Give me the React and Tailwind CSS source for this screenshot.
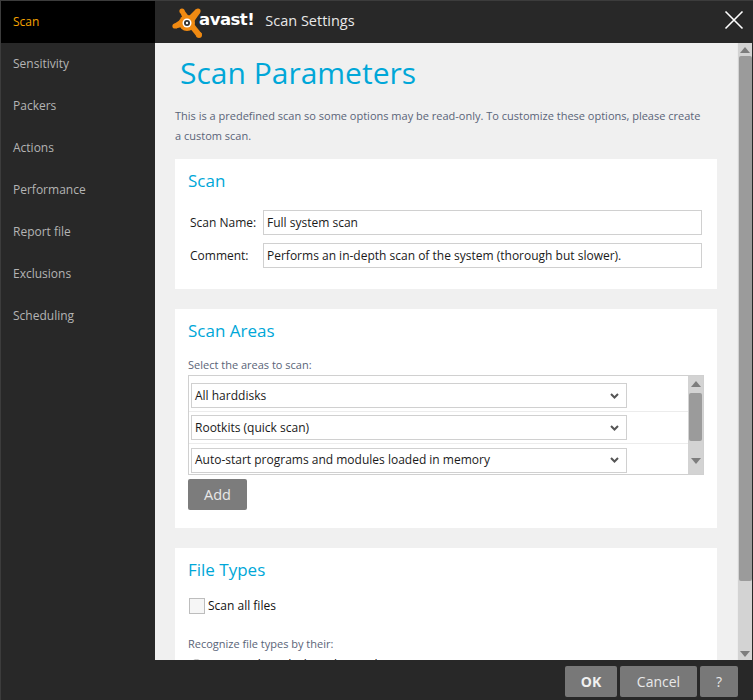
import React from "react";

const NAV_ITEMS = ["Scan", "Sensitivity", "Packers", "Actions", "Performance", "Report file", "Exclusions", "Scheduling"];
const AREAS = ["All harddisks", "Rootkits (quick scan)", "Auto-start programs and modules loaded in memory"];

function AvastLogo() {
  return (
    <div className="flex items-center">
      <svg width="31" height="32" viewBox="0 0 31 32" className="shrink-0">
        <g fill="#f08a12">
          <circle cx="15" cy="17" r="8" />
          <circle cx="3" cy="20" r="2.6" />
          <circle cx="10" cy="5" r="2.6" />
          <circle cx="26" cy="5" r="2.6" />
          <circle cx="27" cy="29" r="3" />
          <path d="M2 18 L11 12 L13 20 L4 22.5 Z" />
          <path d="M8 6 L12 4 L18 12 L11 13 Z" />
          <path d="M24 3 L28 7 L21 17 L16 11 Z" />
          <path d="M17 21 L22 18 L30 28 L25 31 Z" />
        </g>
        <circle cx="15" cy="17" r="4.5" fill="#fff" />
        <circle cx="15" cy="17" r="3" fill="#333" />
        <circle cx="15" cy="17" r="1.2" fill="#fff" />
      </svg>
      <span className="ml-[-4px] mt-[-3px] font-['DejaVu_Sans'] text-[16.5px] font-bold tracking-[-0.5px] text-white">avast!</span>
    </div>
  );
}

function Arrow({ up, className }) {
  return (
    <svg width="10" height="6" viewBox="0 0 10 6" className={className}>
      <path d={up ? "M5 0 L10 6 L0 6 Z" : "M0 0 L10 0 L5 6 Z"} fill="#7d7d7d" />
    </svg>
  );
}

function Scrollbar({ children, className }) {
  return <div className={`flex shrink-0 flex-col items-center bg-[#d3d3d3] ${className}`}>{children}</div>;
}

function Field({ label, value }) {
  return (
    <div className="flex items-center">
      <label className="w-[75px] pl-[2px] text-[12px] text-[#1a1a1a]">{label}</label>
      <div className="flex h-[25px] w-[439px] items-center border border-[#d0d0d0] bg-white px-[3px] text-[12px] text-[#1a1a1a]">{value}</div>
    </div>
  );
}

function AreaRow({ label, last }) {
  return (
    <div className={`flex h-[32px] items-center pl-[2px] ${last ? "" : "border-b border-[#ececec]"}`}>
      <div className="flex h-[25px] w-[436px] items-center justify-between border border-[#d0d0d0] bg-white pl-[3px] pr-[7px] text-[12px] text-[#1a1a1a]">
        <span>{label}</span>
        <svg width="9" height="6" viewBox="0 0 9 6">
          <path d="M1 1 L4.5 4.5 L8 1" fill="none" stroke="#555" strokeWidth="2" />
        </svg>
      </div>
    </div>
  );
}

export default function App() {
  return (
    <div className="flex h-[700px] w-[753px] overflow-hidden border-l border-t border-[#3c3c3c] bg-[#282828] font-['Open_Sans',sans-serif]">
      {/* Sidebar */}
      <aside className="w-[154px] shrink-0">
        {NAV_ITEMS.map((item, i) => (
          <div
            key={item}
            className={`flex h-[42px] items-center pl-[12px] text-[12px] ${i === 0 ? "bg-black text-[#f5a300]" : "text-[#b4b4b4]"}`}
          >
            {item}
          </div>
        ))}
      </aside>

      <div className="flex min-w-0 flex-1 flex-col">
        {/* Header */}
        <header className="flex h-[42px] shrink-0 items-center justify-between pl-[17px] pr-[9px]">
          <div className="flex items-center gap-[11px]">
            <AvastLogo />
            <span className="mt-[-3px] text-[14.5px] text-[#e8e8e8]">Scan Settings</span>
          </div>
          <svg width="20" height="20" viewBox="0 0 20 20" className="mt-[-5px]">
            <path d="M1.5 1.5 L18.5 18.5 M18.5 1.5 L1.5 18.5" stroke="#fff" strokeWidth="1.6" />
          </svg>
        </header>

        {/* Content */}
        <div className="flex min-h-0 flex-1 bg-[#f0f0f0]">
          <main className="min-w-0 flex-1 overflow-hidden pl-[20px]">
            <h1 className="ml-[5px] mt-[10px] text-[30px] leading-[40px] text-[#00a7d8]">Scan Parameters</h1>
            <p className="mt-[13px] w-[533px] text-[11px] leading-[20px] text-[#5a6478]">
              This is a predefined scan so some options may be read-only. To customize these options, please create a custom scan.
            </p>

            <section className="mt-[13px] h-[130px] w-[542px] bg-white px-[13px] pt-[10px]">
              <h2 className="text-[17px] leading-[24px] text-[#00a7d8]">Scan</h2>
              <div className="mt-[17px] flex flex-col gap-[8px]">
                <Field label="Scan Name:" value="Full system scan" />
                <Field label="Comment:" value="Performs an in-depth scan of the system (thorough but slower)." />
              </div>
            </section>

            <section className="mt-[20px] h-[219px] w-[542px] bg-white px-[13px] pt-[10px]">
              <h2 className="text-[17px] leading-[24px] text-[#00a7d8]">Scan Areas</h2>
              <p className="mt-[14px] text-[11px] leading-[16px] text-[#5a6478]">Select the areas to scan:</p>
              <div className="mt-[2px] flex h-[100px] w-[516px] border border-[#d0d0d0] bg-white">
                <div className="min-w-0 flex-1 pt-[4px]">
                  {AREAS.map((area, i) => (
                    <AreaRow key={area} label={area} last={i === AREAS.length - 1} />
                  ))}
                </div>
                <Scrollbar className="w-[15px] pt-[5px]">
                  <Arrow up />
                  <div className="mt-[6px] h-[48px] w-[13px] rounded-[2px] bg-[#9b9b9b]" />
                  <Arrow className="mt-[17px]" />
                </Scrollbar>
              </div>
              <button className="mt-[4px] block h-[31px] w-[59px] rounded-[2px] bg-[#7c7c7c] text-[14.5px] text-[#e8e8e8]">Add</button>
            </section>

            <section className="mt-[20px] w-[542px] bg-white px-[13px] pb-[40px] pt-[10px]">
              <h2 className="text-[17px] leading-[24px] text-[#00a7d8]">File Types</h2>
              <div className="mt-[15px] flex items-center">
                <div className="ml-[1px] h-[16px] w-[16px] border border-[#bdbdbd] bg-[#f6f6f6]" />
                <span className="ml-[3px] text-[12px] text-[#111]">Scan all files</span>
              </div>
              <p className="mt-[21px] text-[11px] leading-[16px] text-[#5a6478]">Recognize file types by their:</p>
              <div className="mt-[4px] flex items-center">
                <div className="ml-[2px] h-[13px] w-[13px] rounded-full border border-[#bdbdbd] bg-[#f6f6f6]" />
                <span className="ml-[6px] text-[12px] text-[#111]">Content-based (slow, thorough)</span>
              </div>
            </section>
          </main>

          <Scrollbar className="w-[15px] border-l border-[#ececec] pt-[4px]">
            <Arrow up />
            <div className="mt-[3px] h-[525px] w-[13px] rounded-[2px] bg-[#9b9b9b]" />
            <Arrow className="mb-[3px] mt-auto" />
          </Scrollbar>
          <div className="w-[1px] shrink-0 bg-[#282828]" />
        </div>

        {/* Footer */}
        <footer className="flex h-[40px] shrink-0 items-start justify-end gap-[3px] pr-[15px] pt-[6px]">
          <button className="h-[31px] w-[52px] rounded-[2px] bg-[#787878] text-[14px] font-bold text-[#f0f0f0]">OK</button>
          <button className="h-[31px] w-[77px] rounded-[2px] bg-[#787878] text-[14px] text-[#e8e8e8]">Cancel</button>
          <button className="h-[31px] w-[38px] rounded-[2px] bg-[#787878] text-[14px] text-[#e8e8e8]">?</button>
        </footer>
      </div>
    </div>
  );
}
